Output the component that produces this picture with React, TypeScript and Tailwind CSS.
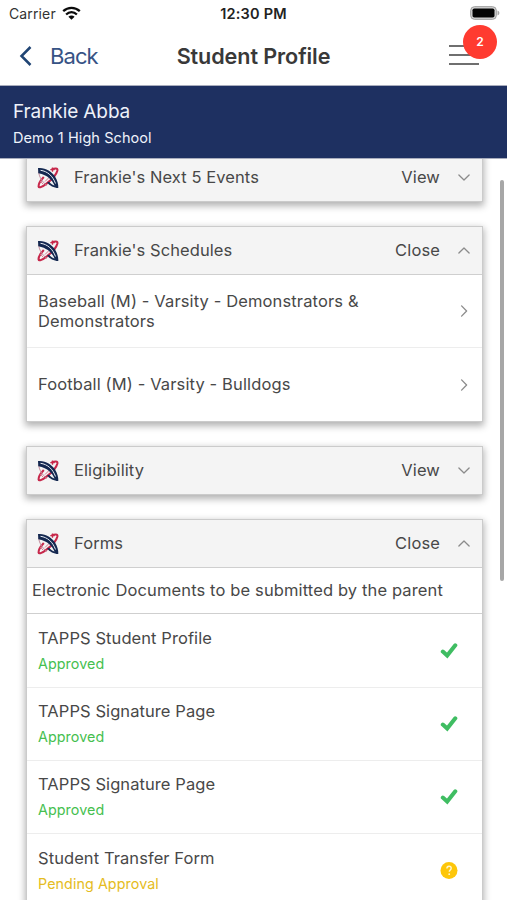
import React from "react";

function Logo() {
  return (
    <svg className="ml-[10px] h-[22px] w-[22px] shrink-0" viewBox="0 0 22 22" fill="none">
      <path d="M14.500 2.800C18 1 20.800 1 20.400 3.400 19.500 7 14.500 12.800 9.500 16.600 5.800 19.500 2 21.500 1.600 19.500 1.400 17.500 3.500 13.500 6.800 10" stroke="#c7284b" strokeWidth="2.100" />
      <path d="M1.800 4.500C1.500 9 5.500 15.500 10 18.500" stroke="#c08a9c" strokeWidth="1" />
      <path d="M2.800 13.500 6 17M8 14.500 12 10.500" stroke="#d9768c" strokeWidth="1" />
      <path d="M15.500.4v4.400M13.300 2.600h4.400" stroke="#c7284b" strokeWidth="1.300" />
      <path d="M1 1C8 .2 14.500 4 18 9.500 20.500 13.500 21.500 17.500 21.300 21 17 21 12.500 18.500 10 15.500L12.200 14.800C14 17 15.500 18 17.500 18.600 15.500 13.500 11 8 1.300 6.200Z" fill="#142850" />
      <path d="M3.500 3.300C10.500 4.200 15.800 9 18.500 16.500" stroke="#e6ebf3" strokeWidth="1" />
    </svg>
  );
}

function Chevron({ d, className }: { d: string; className: string }) {
  return (
    <svg className={`h-3 w-3 shrink-0 ${className}`} viewBox="0 0 12 12" fill="none" stroke="#8b8b8b" strokeWidth="1.3" strokeLinecap="round" strokeLinejoin="round">
      <path d={d} />
    </svg>
  );
}

function Card({ title, open, children }: { title: string; open?: boolean; children?: React.ReactNode }) {
  return (
    <section className="border border-[#cbcbcb] bg-white shadow-[0_3px_7px_1px_rgba(0,0,0,0.3)]">
      <header className="flex h-[47px] items-center bg-[#f4f4f4]">
        <Logo />
        <h2 className="ml-[15px] flex-1 tracking-[0.080px]">{title}</h2>
        <span>{open ? "Close" : "View"}</span>
        <Chevron className="mr-[12px] ml-[18px]" d={open ? "M.9 8 6 3l5.100 5" : "M.9 3 6 8l5.100-5"} />
      </header>
      {children}
    </section>
  );
}

function Schedule({ name, className }: { name: string; className: string }) {
  return (
    <div className={`flex items-center pl-[11px] ${className}`}>
      <p className="w-[345px] leading-[20.500px]">{name}</p>
      <Chevron className="mr-[12px] ml-auto" d="M3.600.9 8.600 6l-5 5.100" />
    </div>
  );
}

function FormRow({ name, pending, className }: { name: string; pending?: boolean; className: string }) {
  return (
    <div className={`flex shrink-0 items-center border-b border-[#ededed] pl-[11px] ${className}`}>
      <div>
        <p className="leading-[25px] tracking-[0.080px]">{name}</p>
        <p className={`text-[14.300px] leading-[25px] tracking-[0.080px] ${pending ? "text-[#e5bc22]" : "text-[#46bf50]"}`}>
          {pending ? "Pending Approval" : "Approved"}
        </p>
      </div>
      <svg className="mr-[24px] ml-auto h-[18px] w-[18px]" viewBox="0 0 18 18" fill="none">
        {pending ? (
          <>
            <circle cx="9" cy="8.500" r="8.500" fill="#fdc60a" />
            <path d="M6.900 6.600c0-1.500.9-2.300 2.200-2.300 1.200 0 2.100.8 2.100 1.900 0 1.700-1.900 1.800-1.900 3.500" stroke="#fff6cf" strokeWidth="1.400" />
            <circle cx="9.200" cy="12.200" r=".9" fill="#fff6cf" />
          </>
        ) : (
          <path d="m2.800 9.600 4.400 4 8.100-10.300" stroke="#3fbd62" strokeWidth="4" strokeLinecap="round" strokeLinejoin="miter" />
        )}
      </svg>
    </div>
  );
}

export default function App() {
  return (
    <div className="flex h-[900px] w-[507px] flex-col overflow-hidden bg-white font-['Inter','Liberation_Sans',sans-serif] text-[16.500px] tracking-[0.130px] text-[#484848]">
      <div className="grid h-[27px] shrink-0 grid-cols-3 items-center px-[9px] text-[14px] text-[#333]">
        <div className="flex items-center gap-[6px]">
          <span>Carrier</span>
          <svg className="-mt-[2px] h-[14px] w-[19px]" viewBox="0 0 19 14" fill="none" stroke="#0b0b0b" strokeWidth="2.300">
            <path d="M1.200 5.200c4.800-4.500 11.800-4.500 16.600 0M4.100 8.500c3.200-3 7.600-3 10.800 0" />
            <path d="M6.400 10.700c1.800-1.600 4.400-1.600 6.200 0L9.500 13.800Z" fill="#0b0b0b" stroke="none" />
          </svg>
        </div>
        <span className="text-center text-[14.500px] font-semibold tracking-[0.200px] text-[#222]">12:30 PM</span>
        <svg className="-mt-px -mr-[2px] ml-auto h-[14px] w-[30px]" viewBox="0 0 30 14">
          <rect x=".7" y=".7" width="25.600" height="12.600" rx="3.700" fill="#d5d5d5" stroke="#9b9b9b" />
          <rect x="2.500" y="2.500" width="22" height="9" rx="1.800" fill="#050505" />
          <path d="M27.500 4.500c2.500 1 2.500 4 0 5Z" fill="#a8a8a8" />
        </svg>
      </div>
      <nav className="relative flex h-[59px] shrink-0 items-center border-b border-[#a9adbd] tracking-normal">
        <svg className="ml-[19px] h-[20px] w-[13px]" viewBox="0 0 13 20" fill="none" stroke="#204574" strokeWidth="2.500">
          <path d="M11.500 1 2.500 10l9 9" />
        </svg>
        <span className="ml-[18px] text-[22px] tracking-[-0.900px] text-[#375385]">Back</span>
        <h1 className="absolute left-0 w-full text-center text-[21.600px] font-[560] tracking-[-0.100px] text-[#393939]">Student Profile</h1>
        <div className="relative mr-[28px] mb-[2px] ml-auto flex h-[20px] w-[30px] flex-col justify-between">
          <i className="h-[2px] bg-[#6f6f6f]" />
          <i className="h-[2px] bg-[#6f6f6f]" />
          <i className="h-[2px] bg-[#6f6f6f]" />
          <b className="absolute -top-[20px] left-[14px] flex h-[34px] w-[34px] items-center justify-center rounded-full bg-[#ff3b30] text-[12px] font-semibold text-white">2</b>
        </div>
      </nav>
      <div className="h-[73px] shrink-0 border-b border-[#a9adbd] bg-[#1e3061] pl-[13px] text-[#eef2fa]">
        <p className="pt-[12px] text-[19px] leading-[27px] tracking-[-0.100px]">Frankie Abba</p>
        <p className="text-[14.500px] leading-[26px] tracking-[0.080px]">Demo 1 High School</p>
      </div>
      <main className="relative flex-1 overflow-hidden">
        <div className="-mt-[6px] ml-[26px] flex w-[457px] flex-col gap-[24px]">
          <Card title="Frankie's Next 5 Events" />
          <Card title="Frankie's Schedules" open>
            <Schedule className="h-[74px] border-y border-t-[#cfcfcf] border-b-[#ededed]" name="Baseball (M) - Varsity - Demonstrators & Demonstrators" />
            <Schedule className="h-[73px]" name="Football (M) - Varsity - Bulldogs" />
          </Card>
          <Card title="Eligibility" />
          <Card title="Forms" open>
            <p className="flex h-[47px] items-center border-y border-[#cfcfcf] pl-[5px] whitespace-nowrap">Electronic Documents to be submitted by the parent</p>
            <FormRow className="h-[74px]" name="TAPPS Student Profile" />
            <FormRow className="h-[73px]" name="TAPPS Signature Page" />
            <FormRow className="h-[73px]" name="TAPPS Signature Page" />
            <FormRow className="h-[74px]" name="Student Transfer Form" pending />
          </Card>
        </div>
        <div className="absolute top-[21px] right-[3px] h-[401px] w-[4px] rounded-full bg-[#a7a7a7]" />
      </main>
    </div>
  );
}
